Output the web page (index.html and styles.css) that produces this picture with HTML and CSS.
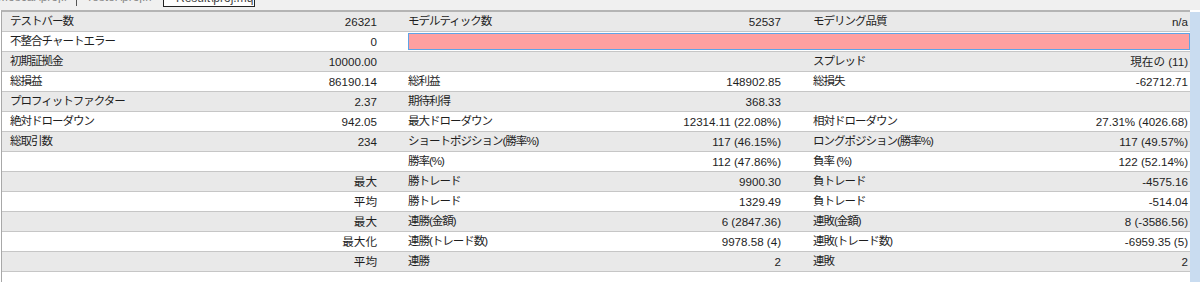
FILE: index.html
```html
<!DOCTYPE html>
<html lang="ja">
<head>
<meta charset="utf-8">
<link rel="stylesheet" href="styles.css">
</head>
<body>
<div class="tabs">
  <div class="tab t1"><span>Moscar\proj.mq</span></div>
  <div class="sep"></div>
  <div class="tab t2"><span>Tester\proj.mq</span></div>
  <div class="tab t3"><span>Result\proj.mq</span></div>
</div>
<div class="main">
  <div class="report">
    <div class="row g"><div class="l">テストバー数</div><div class="v v1">26321</div><div class="l">モデルティック数</div><div class="v v2">52537</div><div class="l">モデリング品質</div><div class="v v3">n/a</div></div>
    <div class="row"><div class="l">不整合チャートエラー</div><div class="v v1">0</div><div class="barcell"><div class="bar"></div></div></div>
    <div class="row g"><div class="l">初期証拠金</div><div class="v v1">10000.00</div><div class="l"></div><div class="v v2"></div><div class="l">スプレッド</div><div class="v v3">現在の (11)</div></div>
    <div class="row"><div class="l">総損益</div><div class="v v1">86190.14</div><div class="l">総利益</div><div class="v v2">148902.85</div><div class="l">総損失</div><div class="v v3">-62712.71</div></div>
    <div class="row g"><div class="l">プロフィットファクター</div><div class="v v1">2.37</div><div class="l">期待利得</div><div class="v v2">368.33</div><div class="l"></div><div class="v v3"></div></div>
    <div class="row"><div class="l">絶対ドローダウン</div><div class="v v1">942.05</div><div class="l">最大ドローダウン</div><div class="v v2">12314.11 (22.08%)</div><div class="l">相対ドローダウン</div><div class="v v3">27.31% (4026.68)</div></div>
    <div class="row g"><div class="l">総取引数</div><div class="v v1">234</div><div class="l">ショートポジション(勝率%)</div><div class="v v2">117 (46.15%)</div><div class="l">ロングポジション(勝率%)</div><div class="v v3">117 (49.57%)</div></div>
    <div class="row"><div class="l"></div><div class="v v1"></div><div class="l">勝率(%)</div><div class="v v2">112 (47.86%)</div><div class="l">負率 (%)</div><div class="v v3">122 (52.14%)</div></div>
    <div class="row g"><div class="l"></div><div class="v v1">最大</div><div class="l">勝トレード</div><div class="v v2">9900.30</div><div class="l">負トレード</div><div class="v v3">-4575.16</div></div>
    <div class="row"><div class="l"></div><div class="v v1">平均</div><div class="l">勝トレード</div><div class="v v2">1329.49</div><div class="l">負トレード</div><div class="v v3">-514.04</div></div>
    <div class="row g"><div class="l"></div><div class="v v1">最大</div><div class="l">連勝(金額)</div><div class="v v2">6 (2847.36)</div><div class="l">連敗(金額)</div><div class="v v3">8 (-3586.56)</div></div>
    <div class="row"><div class="l"></div><div class="v v1">最大化</div><div class="l">連勝(トレード数)</div><div class="v v2">9978.58 (4)</div><div class="l">連敗(トレード数)</div><div class="v v3">-6959.35 (5)</div></div>
    <div class="row g"><div class="l"></div><div class="v v1">平均</div><div class="l">連勝</div><div class="v v2">2</div><div class="l">連敗</div><div class="v v3">2</div></div>
  </div>
  <div class="side"></div>
</div>
</body>
</html>
```

FILE: styles.css
```css
html, body {
  margin: 0;
  padding: 0;
  background: #ffffff;
}
body {
  width: 1200px;
  height: 282px;
  overflow: hidden;
  font-family: "Liberation Sans", "Noto Sans CJK JP", sans-serif;
  font-size: 11.6px;
  color: #1e1e1e;
}
.tabs {
  height: 10px;
  background: #f0f0f0;
  display: flex;
  align-items: flex-start;
  overflow: hidden;
  font-size: 12px;
  color: #8a8a8a;
  white-space: nowrap;
}
.tab {
  height: 3px;
  overflow: hidden;
}
.tab span {
  display: block;
  line-height: 12px;
  margin-top: -9px;
}
.t1 {
  width: 70px;
  margin-left: -2px;
}
.sep {
  width: 1px;
  height: 6px;
  margin: 0 9px 0 8px;
  background: #555555;
}
.t2 {
  width: 66px;
}
.t3 {
  margin-left: 11px;
  width: 78px;
  height: 6px;
  padding-left: 12px;
  background: #ffffff;
  border: 1px solid #222222;
  border-top: none;
  color: #444444;
}
.t3 span {
  margin-top: -8px;
}
.main {
  display: flex;
  height: 272px;
}
.report {
  width: 1188px;
  margin-left: 1px;
  border-left: 1px solid #a8a8a8;
  border-top: 2px solid #b4b4b4;
  background: #ffffff;
}
.side {
  width: 10px;
  margin-top: 2px;
  background: #c9dcf0;
}
.row {
  display: grid;
  grid-template-columns: 198px 200px 200px 205px 195px 190px;
  height: 19px;
  line-height: 19px;
  border-bottom: 1px solid #c6c6c6;
  background: #ffffff;
  white-space: nowrap;
}
.row.g {
  background: #e9e9e9;
}
.l {
  padding-left: 8px;
  overflow: hidden;
  font-size: 11.5px;
  letter-spacing: -1px;
}
.v {
  text-align: right;
}
.v1 { padding-right: 23px; }
.v2 { padding-right: 24px; }
.v3 { padding-right: 2px; }
.barcell {
  grid-column: 3 / 7;
  padding: 1px 0 0 8px;
  background: #ffffff;
}
.bar {
  height: 15px;
  background: #ffa0a0;
  border: 1px solid #5fa4e6;
}
```
